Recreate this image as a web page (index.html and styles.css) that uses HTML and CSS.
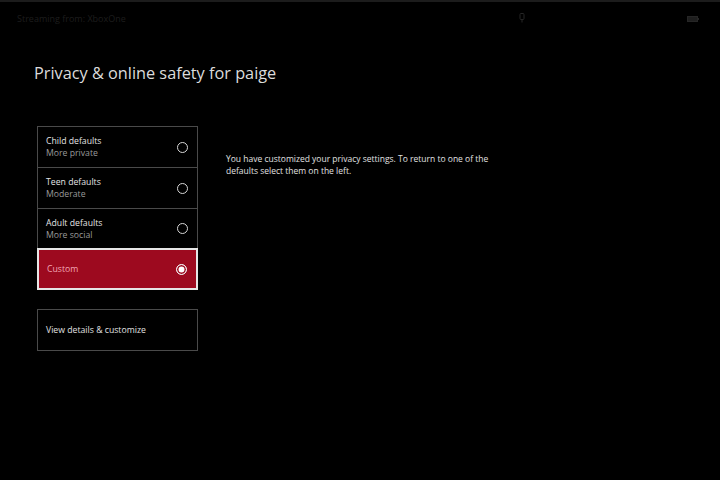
FILE: index.html
```html
<!DOCTYPE html>
<html>
<head>
<meta charset="utf-8">
<link rel="stylesheet" href="styles.css">
</head>
<body>
<div class="screen">
  <div class="topbar">
    <span class="stream">Streaming from: XboxOne</span>
    <span class="mic"><svg width="6" height="10" viewBox="0 0 6 10"><rect x="1" y="0.5" width="4" height="6" rx="1" fill="none" stroke="#262626" stroke-width="1"/><path d="M3 6.5v3" stroke="#262626" stroke-width="1"/></svg></span>
    <span class="batt"><svg width="12" height="6" viewBox="0 0 12 6"><rect x="0.5" y="0.5" width="10" height="5" fill="#1e1e1e" stroke="#262626"/><rect x="10.5" y="2" width="1.5" height="2" fill="#262626"/></svg></span>
  </div>
  <h1 class="title">Privacy &amp; online safety for paige</h1>
  <div class="content">
    <div class="left">
      <div class="list">
        <div class="item">
          <div class="labels"><div class="name">Child defaults</div><div class="sub">More private</div></div>
          <span class="radio"></span>
        </div>
        <div class="item">
          <div class="labels"><div class="name">Teen defaults</div><div class="sub">Moderate</div></div>
          <span class="radio"></span>
        </div>
        <div class="item">
          <div class="labels"><div class="name">Adult defaults</div><div class="sub">More social</div></div>
          <span class="radio"></span>
        </div>
        <div class="item selected">
          <div class="labels"><div class="name">Custom</div></div>
          <span class="radio on"></span>
        </div>
      </div>
      <div class="details">View details &amp; customize</div>
    </div>
    <p class="desc">You have customized your privacy settings. To return to one of the defaults select them on the left.</p>
  </div>
</div>
</body>
</html>
```
FILE: styles.css
```css
html, body {
  margin: 0;
  padding: 0;
  background: #000;
}
.screen {
  width: 720px;
  height: 480px;
  background: #000;
  font-family: "Open Sans", "Noto Sans", sans-serif;
  color: #ddd;
  border-top: 2px solid #1c1c1c;
  box-sizing: border-box;
  overflow: hidden;
}
.topbar {
  height: 32px;
  display: flex;
  align-items: center;
  padding: 0 0 0 17px;
  position: relative;
}
.stream {
  font-size: 9px;
  color: #1d1d1d;
}
.mic {
  position: absolute;
  left: 519px;
  top: 11px;
  display: flex;
}
.batt {
  position: absolute;
  left: 687px;
  top: 14px;
  display: flex;
}
.title {
  margin: 27px 0 0 34px;
  font-size: 16.3px;
  font-weight: 400;
  color: #dcdcdc;
  line-height: 24px;
}
.content {
  display: flex;
  margin-top: 41px;
  padding-left: 37px;
}
.left {
  width: 161px;
}
.list {
  display: flex;
  flex-direction: column;
}
.item {
  height: 41px;
  border: 1px solid #4a4a4a;
  border-bottom: none;
  display: flex;
  align-items: center;
  justify-content: space-between;
  padding: 0 9px 0 8px;
  box-sizing: border-box;
}
.item:nth-child(3) {
  border-bottom: 1px solid #4a4a4a;
  height: 41px;
}
.labels {
  display: flex;
  flex-direction: column;
  gap: 0;
}
.name {
  font-size: 8.7px;
  line-height: 12px;
  color: #e4e4e4;
}
.sub {
  font-size: 8.7px;
  line-height: 12px;
  color: #9a9a9a;
}
.radio {
  width: 9px;
  height: 9px;
  border: 1.5px solid #d8d8d8;
  border-radius: 50%;
  box-sizing: content-box;
}
.item.selected {
  height: 42px;
  background: #9d0a1f;
  border: 2px solid #e6e6e6;
  padding-left: 8px;
  margin-top: -1px;
}
.item.selected .name {
  color: #f2a6b4;
}
.radio.on {
  background: #fff;
  box-shadow: inset 0 0 0 1.5px #9d0a1f;
  border-color: #f0f0f0;
}
.details {
  margin-top: 19px;
  height: 42px;
  border: 1px solid #4a4a4a;
  box-sizing: border-box;
  display: flex;
  align-items: center;
  padding-left: 8px;
  font-size: 8.7px;
  color: #e0e0e0;
}
.desc {
  margin: 27px 0 0 28px;
  width: 275px;
  font-size: 8.5px;
  line-height: 12px;
  color: #e0e0e0;
}
```
